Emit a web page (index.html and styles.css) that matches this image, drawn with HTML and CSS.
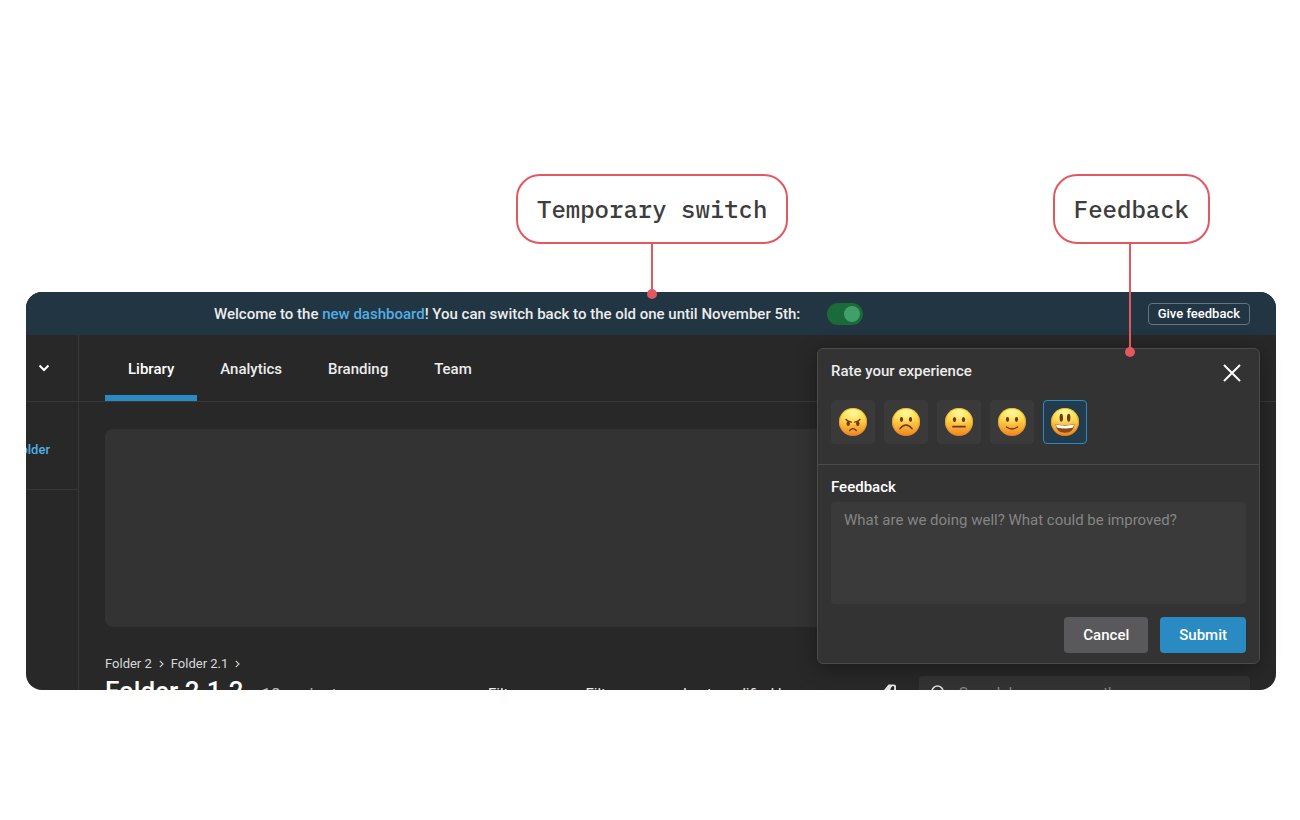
FILE: index.html
```html
<!DOCTYPE html>
<html lang="en">
<head>
<meta charset="utf-8">
<title>Dashboard feedback</title>
<link rel="stylesheet" href="styles.css">
</head>
<body>
<svg class="defs" aria-hidden="true">
  <defs>
    <linearGradient id="skin" x1="0" y1="0" x2="0" y2="1">
      <stop offset="0" stop-color="#fff04d"/>
      <stop offset=".45" stop-color="#fdcf45"/>
      <stop offset="1" stop-color="#ee8423"/>
    </linearGradient>
    <radialGradient id="shine" cx=".5" cy=".15" r=".5">
      <stop offset="0" stop-color="#fffbb0" stop-opacity=".8"/>
      <stop offset="1" stop-color="#fffbb0" stop-opacity="0"/>
    </radialGradient>
    <symbol id="face" viewBox="0 0 28 28">
      <circle cx="14" cy="14" r="14" fill="url(#skin)"/>
      <circle cx="14" cy="14" r="13.5" fill="none" stroke="#df7d1e" stroke-opacity=".45"/>
      <circle cx="14" cy="14" r="13" fill="url(#shine)"/>
    </symbol>
  </defs>
</svg>
<main class="stage">
  <div class="frame">
    <div class="screen">
      <div class="banner">
        <p class="banner-text">Welcome to the <a href="#">new dashboard</a>! You can switch back to the old one until November 5th:</p>
        <input class="switch" type="checkbox" role="switch" aria-label="Use the new dashboard" checked>
        <button class="give" type="button">Give feedback</button>
      </div>
      <div class="app">
        <aside class="sidebar">
          <button class="workspace" type="button" aria-label="Switch workspace">
            <svg width="12" height="8" viewBox="0 0 12 8"><path d="M1.500 1.500 6 6l4.500-4.500" fill="none" stroke="#fff" stroke-width="2"/></svg>
          </button>
          <div class="add"><a href="#">Add folder</a></div>
        </aside>
        <div class="content">
          <nav class="tabs">
            <a class="tab current" href="#">Library</a>
            <a class="tab" href="#">Analytics</a>
            <a class="tab" href="#">Branding</a>
            <a class="tab" href="#">Team</a>
          </nav>
          <div class="library">
            <div class="hero"></div>
            <nav class="crumbs">
              <a href="#">Folder 2</a>
              <svg width="5" height="8" viewBox="0 0 5 8"><path d="M.8.8 4 4 .8 7.200" fill="none" stroke="#ccc" stroke-width="1.200"/></svg>
              <a href="#">Folder 2.1</a>
              <svg width="5" height="8" viewBox="0 0 5 8"><path d="M.8.8 4 4 .8 7.200" fill="none" stroke="#ccc" stroke-width="1.200"/></svg>
            </nav>
            <div class="toolbar">
              <div class="heading"><h1>Folder 2.1.2</h1><span class="count">18 projects</span></div>
              <div class="filters">
                <button type="button">Filter</button>
                <button type="button">Filter</button>
                <button type="button">Last modified by</button>
              </div>
              <svg class="tag" width="16" height="16" viewBox="0 0 16 16"><path fill="#e4e4e4" fill-rule="evenodd" d="M7.500.500h5.500a2 2 0 0 1 2 2V8l-7 7L1 8.500zM12 2a1.700 3 20 1 0 .1 0z"/></svg>
              <label class="search">
                <svg width="16" height="16" viewBox="0 0 16 16"><circle cx="6.500" cy="6.500" r="5.500" fill="none" stroke="#ddd" stroke-width="1.500"/><path d="m10.500 10.500 5 5" stroke="#ddd" stroke-width="1.500"/></svg>
                <input type="text" placeholder="Search by name or path" aria-label="Search">
              </label>
            </div>
          </div>
        </div>
      </div>
    </div>

    <form class="popover">
      <fieldset class="rating">
        <legend>Rate your experience</legend>
        <div class="faces">
          <label class="face"><input type="radio" name="rate" aria-label="Angry">
            <svg viewBox="0 0 28 28"><use href="#face"/><g fill="#74370c"><ellipse cx="9.200" cy="15.500" rx="1.700" ry="2.500"/><ellipse cx="18.800" cy="15.500" rx="1.700" ry="2.500"/></g><g fill="none" stroke="#74370c" stroke-width="1.300" stroke-linecap="round"><path d="M7 11.500q1.500 2 5.300 2.700M21 11.500q-1.500 2-5.300 2.700M10.700 22.500q3.300-3.800 6.600 0"/></g></svg></label>
          <label class="face"><input type="radio" name="rate" aria-label="Unhappy">
            <svg viewBox="0 0 28 28"><use href="#face"/><g fill="#74370c"><ellipse cx="9.500" cy="11.500" rx="1.600" ry="2.400"/><ellipse cx="18.500" cy="11.500" rx="1.600" ry="2.400"/></g><path d="M7.800 20.800q6.200-7.600 12.400 0" fill="none" stroke="#74370c" stroke-width="1.300" stroke-linecap="round"/></svg></label>
          <label class="face"><input type="radio" name="rate" aria-label="Neutral">
            <svg viewBox="0 0 28 28"><use href="#face"/><g fill="#74370c"><ellipse cx="9.500" cy="11.500" rx="1.700" ry="2.500"/><ellipse cx="18.500" cy="11.500" rx="1.700" ry="2.500"/></g><path d="M8 18.700h12" stroke="#74370c" stroke-width="1.700" stroke-linecap="round"/></svg></label>
          <label class="face"><input type="radio" name="rate" aria-label="Happy">
            <svg viewBox="0 0 28 28"><use href="#face"/><g fill="#74370c"><ellipse cx="9.500" cy="11.500" rx="1.600" ry="2.400"/><ellipse cx="18.500" cy="11.500" rx="1.600" ry="2.400"/></g><path d="M8.500 19q5.500 4 11 0" fill="none" stroke="#74370c" stroke-width="1.300" stroke-linecap="round"/></svg></label>
          <label class="face"><input type="radio" name="rate" aria-label="Delighted" checked>
            <svg viewBox="0 0 28 28"><use href="#face"/><g fill="#74370c"><ellipse cx="10.300" cy="9.800" rx="1.700" ry="4"/><ellipse cx="17.700" cy="9.800" rx="1.700" ry="4"/></g><path d="M4.500 16q9.500 2.600 19 0-.8 8.700-9.500 8.700T4.500 16z" fill="#8a4a18"/><path d="M5 16.500q9 2.300 18 0l-.8 3q-8.200 2.200-16.400 0z" fill="#fff"/></svg></label>
        </div>
      </fieldset>
      <div class="comment">
        <label class="comment-label" for="comment">Feedback</label>
        <textarea id="comment" placeholder="What are we doing well? What could be improved?"></textarea>
        <div class="actions">
          <button class="btn" type="button">Cancel</button>
          <button class="btn primary" type="submit">Submit</button>
        </div>
      </div>
      <button class="close" type="button" aria-label="Close">
        <svg width="18" height="18" viewBox="0 0 18 18"><path d="m1 1 16 16M17 1 1 17" stroke="#fff" stroke-width="2"/></svg>
      </button>
    </form>

    <div class="callout callout-switch"><span class="bubble">Temporary switch</span><span class="pin"></span></div>
    <div class="callout callout-feedback"><span class="bubble">Feedback</span><span class="pin long"></span></div>
  </div>
</main>
</body>
</html>
```
FILE: styles.css
```css
* { box-sizing: border-box; }

body {
  margin: 0;
  background: #fff;
  color: #ececec;
  font: 500 15px/20px Roboto, sans-serif;
}

a { color: inherit; text-decoration: none; }
button, input, textarea { font: inherit; color: inherit; }
button { padding: 0; border: 0; background: none; }
.defs { position: absolute; width: 0; height: 0; }

.stage { padding: 292px 24px 0 26px; }
.frame { position: relative; }

/* The dashboard is cropped below the folder heading. */
.screen {
  display: flex;
  flex-direction: column;
  height: 398px;
  overflow: hidden;
  border-radius: 16px;
  background: #282828;
}

.banner {
  display: flex;
  flex: none;
  align-items: center;
  height: 43px;
  padding: 0 26px 0 188px;
  background: #213543;
}
.banner-text { margin: 0; white-space: nowrap; }
.banner a { color: #51aee6; }
.switch {
  appearance: none;
  display: flex;
  justify-content: flex-end;
  width: 36px;
  height: 22px;
  margin: 0 0 0 27px;
  padding: 3px;
  border-radius: 11px;
  background: #1b6a3a;
}
.switch::before {
  content: "";
  width: 16px;
  height: 16px;
  border-radius: 50%;
  background: #419f6a;
}
.give {
  height: 22px;
  margin-left: auto;
  padding: 0 9px;
  border: 1px solid #667580;
  border-radius: 4px;
  color: #fff;
  font-size: 13px;
  line-height: 20px;
}

.app { display: flex; flex: 1; }
.sidebar {
  width: 53px;
  flex: none;
  overflow: hidden;
  border-right: 1px solid #383838;
}
.workspace {
  display: flex;
  align-items: center;
  justify-content: flex-end;
  width: 100%;
  height: 67px;
  padding-right: 28px;
  border-bottom: 1px solid #383838;
}
.add {
  display: flex;
  align-items: center;
  justify-content: flex-end;
  height: 88px;
  padding: 8px 28px 0 0;
  border-bottom: 1px solid #383838;
  color: #51aee6;
  font-size: 13px;
  white-space: nowrap;
}

.content { flex: 1; min-width: 0; }
.tabs {
  display: flex;
  height: 67px;
  padding-left: 26px;
  border-bottom: 1px solid #383838;
}
.tab {
  display: flex;
  align-items: center;
  padding: 7px 23px 0;
  border-bottom: 6px solid transparent;
}
.tab.current { border-color: #2a8ac2; color: #fff; }

.library { padding: 27px 26px 0; }
.hero { height: 198px; border-radius: 8px; background: #333; }
.crumbs {
  display: flex;
  align-items: center;
  gap: 7px;
  margin-top: 27px;
  color: #d8d8d8;
  font-size: 13px;
  font-weight: 400;
}
.toolbar {
  display: grid;
  grid-template-columns: 383px 1fr 16px 353px;
  align-items: start;
}
.heading { display: flex; align-items: baseline; gap: 18px; }
.heading h1 {
  margin: 2px 0 0;
  color: #fff;
  font-size: 26px;
  line-height: 30px;
  font-weight: 500;
}
.count { color: #bbb; font-size: 17px; font-weight: 400; }
.filters { display: flex; gap: 64px; padding-top: 10px; white-space: nowrap; }
.filters button { font-weight: 400; }
.tag { margin-top: 10px; }
.search {
  display: flex;
  align-items: center;
  gap: 12px;
  height: 34px;
  margin: 2px 0 0 22px;
  padding: 0 12px;
  border-radius: 4px;
  background: #333;
}
.search svg { flex: none; }
.search input {
  min-width: 0;
  flex: 1;
  padding: 0;
  border: 0;
  background: none;
  font-weight: 400;
}
::placeholder { color: #858585; opacity: 1; }

/* Feedback form */
.popover {
  position: absolute;
  top: 56px;
  right: 16px;
  width: 443px;
  border: 1px solid #4a4a4a;
  border-radius: 6px;
  background: #333;
  box-shadow: 0 4px 20px rgba(0, 0, 0, .35);
}
.rating {
  margin: 0;
  padding: 12px 13px 20px;
  border: 0;
  border-bottom: 1px solid #4a4a4a;
}
.rating legend { float: left; padding: 0; }
.faces { display: flex; gap: 9px; clear: both; padding-top: 19px; }
.face {
  display: grid;
  place-items: center;
  width: 44px;
  height: 44px;
  border: 1px solid #3a3a3a;
  border-radius: 4px;
  background: #3a3a3a;
}
.face input { position: absolute; opacity: 0; }
.face svg { width: 28px; height: 28px; }
.face:has(:checked) { border-color: #2a8ac2; background: #233c4d; }
.close { position: absolute; top: 15px; right: 18px; display: flex; }

.comment { padding: 12px 13px 10px; }
.comment-label { display: block; color: #fff; }
.comment textarea {
  display: block;
  width: 100%;
  height: 102px;
  margin-top: 5px;
  padding: 8px 13px;
  border: 0;
  border-radius: 4px;
  background: #3a3a3a;
  font-weight: 400;
  resize: none;
}
.actions { display: flex; justify-content: flex-end; gap: 12px; margin-top: 13px; }
.btn {
  height: 36px;
  padding: 0 19px;
  border-radius: 4px;
  background: #59595b;
  color: #fff;
}
.btn.primary { background: #2a8ac2; }

/* Annotations */
.callout {
  position: absolute;
  top: -118px;
  display: flex;
  flex-direction: column;
  align-items: center;
}
.callout-switch { left: 490px; }
.callout-feedback { right: 66px; }
.bubble {
  padding: 18px 19px;
  border: 2px solid #e35761;
  border-radius: 24px;
  color: #3d3d3d;
  font: 500 24px/30px "IBM Plex Mono", "Liberation Mono", monospace;
  white-space: nowrap;
}
.pin { position: relative; width: 2px; height: 50px; background: #e35761; }
.pin.long { height: 108px; margin-right: 3px; }
.pin::after {
  content: "";
  position: absolute;
  bottom: -5px;
  left: -4px;
  width: 10px;
  height: 10px;
  border-radius: 50%;
  background: #e35761;
}
```
